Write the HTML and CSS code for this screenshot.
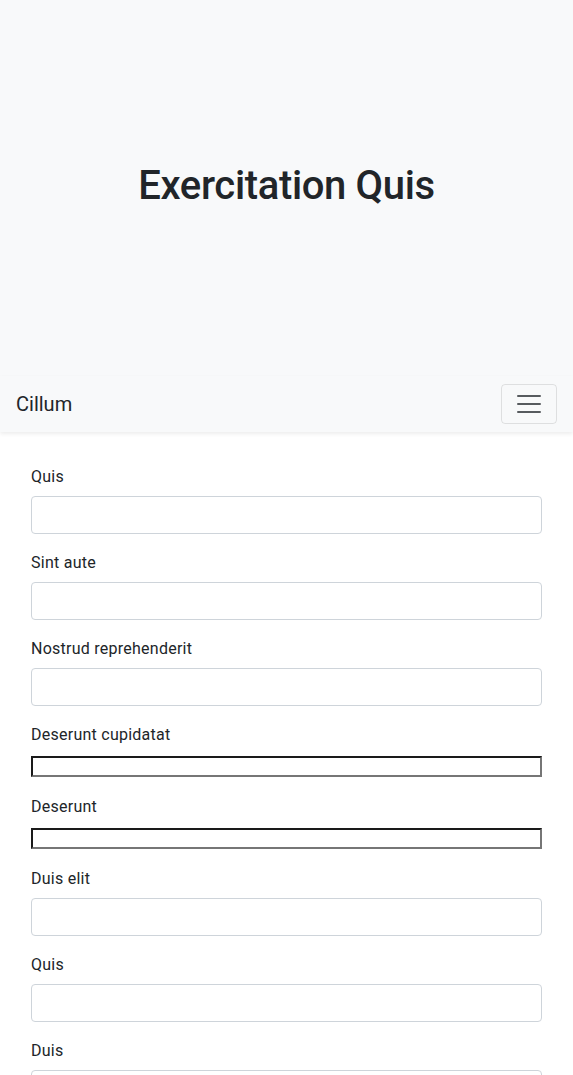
FILE: index.html
```html
<!DOCTYPE html>
<html lang="en">
<head>
<meta charset="utf-8">
<title>Exercitation Quis</title>
<link rel="stylesheet" href="styles.css">
</head>
<body>
<header class="hero">
  <h1 class="hero-title">Exercitation Quis</h1>
</header>
<nav class="navbar">
  <span class="brand">Cillum</span>
  <button class="toggler" type="button" aria-label="Toggle navigation">
    <svg width="30" height="30" viewBox="0 0 30 30"><path d="M4 7h22M4 15h22M4 23h22" stroke="rgba(33,37,41,0.75)" stroke-width="2" stroke-linecap="round" fill="none"/></svg>
  </button>
</nav>
<main class="content">
  <form class="form">
    <div class="field"><label class="label">Quis</label><input class="control" type="text"></div>
    <div class="field"><label class="label">Sint aute</label><input class="control" type="text"></div>
    <div class="field"><label class="label">Nostrud reprehenderit</label><input class="control" type="text"></div>
    <div class="field"><label class="label">Deserunt cupidatat</label><div class="plain-wrap"><div class="plain"></div></div></div>
    <div class="field"><label class="label">Deserunt</label><div class="plain-wrap"><div class="plain"></div></div></div>
    <div class="field"><label class="label">Duis elit</label><input class="control" type="text"></div>
    <div class="field"><label class="label">Quis</label><input class="control" type="text"></div>
    <div class="field"><label class="label">Duis</label><input class="control" type="text"></div>
  </form>
</main>
</body>
</html>
```
FILE: styles.css
```css
* { box-sizing: border-box; }
html, body { margin: 0; padding: 0; }
body {
  font-family: Roboto, "Liberation Sans", Arial, sans-serif;
  font-size: 16px;
  line-height: 1.5;
  color: #212529;
  background: #fff;
}
.hero {
  height: 376px;
  background: #f8f9fa;
  display: flex;
  align-items: center;
  justify-content: center;
}
.hero-title {
  margin: 0 0 4px;
  font-size: 40px;
  font-weight: 500;
  line-height: 1.2;
  letter-spacing: -0.35px;
}
.navbar {
  height: 56px;
  padding: 8px 16px;
  background: #f8f9fa;
  display: flex;
  align-items: center;
  justify-content: space-between;
  box-shadow: 0 2px 4px rgba(0,0,0,0.075);
  position: relative;
}
.brand {
  font-size: 20px;
  line-height: 30px;
}
.toggler {
  width: 56px;
  height: 40px;
  padding: 4px 12px;
  border: 1px solid rgba(0,0,0,0.1);
  border-radius: 4px;
  background: transparent;
  display: flex;
  align-items: center;
  justify-content: center;
}
.toggler svg { display: block; }
.content {
  padding: 32px 31px;
}
.field { margin-bottom: 16px; }
.label {
  display: block;
  margin-bottom: 7px;
  padding-top: 1px;
  line-height: 24px;
  letter-spacing: 0.25px;
}
.control {
  display: block;
  width: 100%;
  height: 38px;
  padding: 6px 12px;
  font: inherit;
  border: 1px solid #ced4da;
  border-radius: 4px;
  background: #fff;
}
.plain-wrap {
  height: 24px;
  padding-top: 2px;
}
.plain {
  width: 100%;
  height: 21px;
  border: 2px solid;
  border-color: #1a1a1a #767676 #767676 #1a1a1a;
  background: #fff;
}
```
